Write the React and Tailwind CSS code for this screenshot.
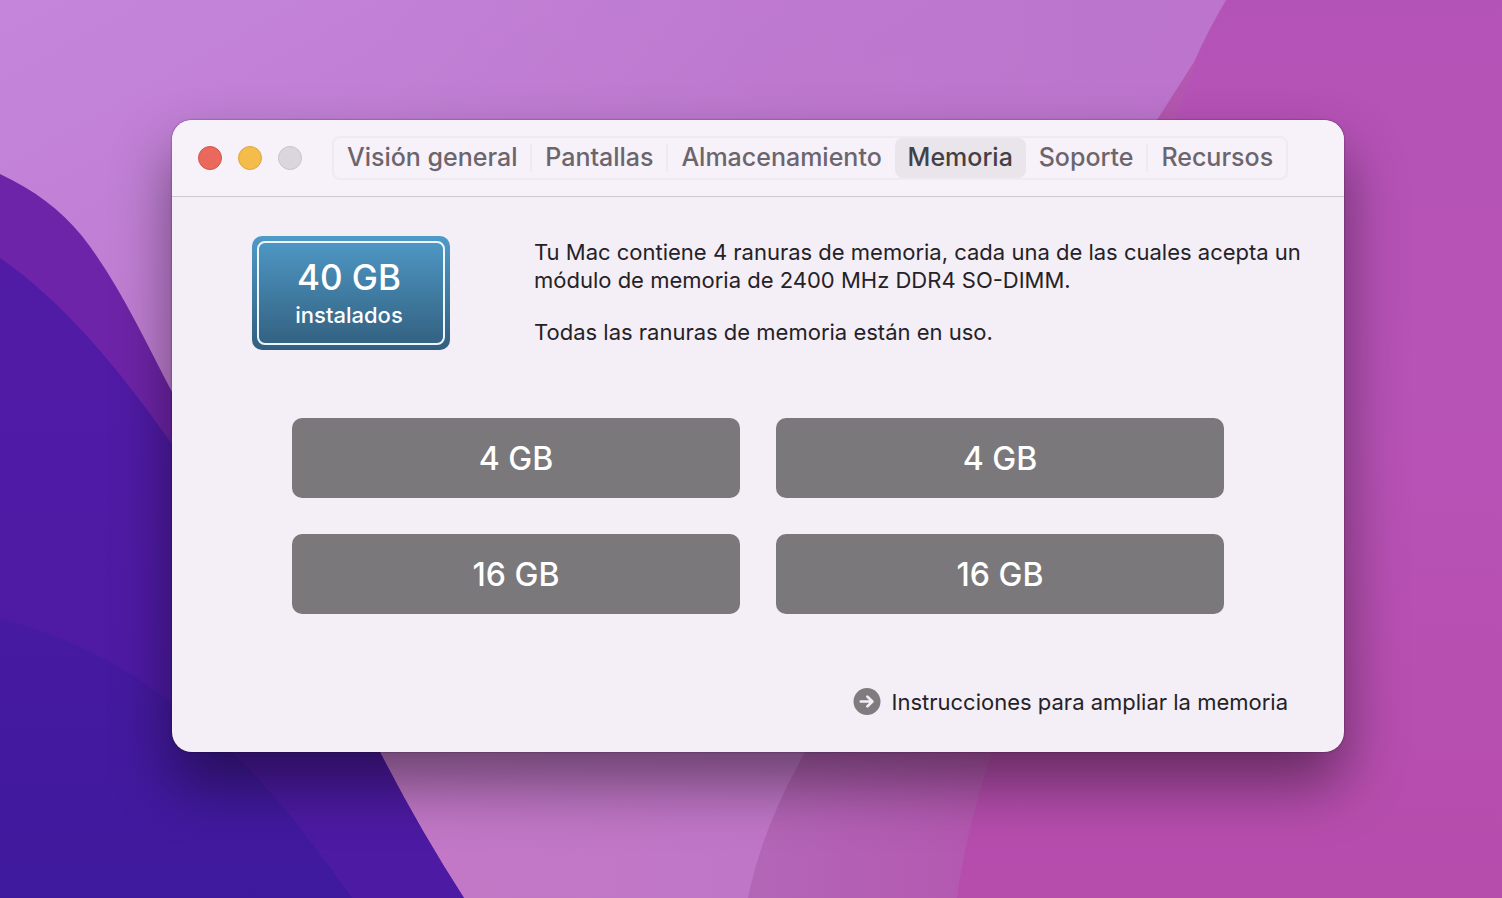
import { useId } from "react";

const TABS = ["Visión general", "Pantallas", "Almacenamiento", "Memoria", "Soporte", "Recursos"];
const ACTIVE_TAB = "Memoria";
const SLOTS = ["4 GB", "4 GB", "16 GB", "16 GB"];

function Wallpaper() {
  const id = useId();
  return (
    <svg
      className="absolute inset-0 -z-10 h-full w-full"
      viewBox="0 0 1502 898"
      preserveAspectRatio="xMidYMid slice"
      aria-hidden="true"
    >
      <defs>
        <linearGradient id={`${id}sky`} gradientUnits="userSpaceOnUse" x1="0" y1="0" x2="500" y2="898">
          <stop offset="0" stopColor="#c485db" />
          <stop offset="0.45" stopColor="#bf7cd0" />
          <stop offset="1" stopColor="#c378c5" />
        </linearGradient>
        <linearGradient id={`${id}skyRight`} x1="0" y1="0" x2="1" y2="0">
          <stop offset="0.25" stopColor="#bb73cc" stopOpacity="0" />
          <stop offset="0.8" stopColor="#bb73cc" stopOpacity="0.8" />
        </linearGradient>
        <linearGradient id={`${id}fold`} gradientUnits="userSpaceOnUse" x1="750" y1="0" x2="990" y2="0">
          <stop offset="0" stopColor="#b366b7" />
          <stop offset="1" stopColor="#b457b0" />
        </linearGradient>
        <linearGradient id={`${id}magenta`} x1="0" y1="0" x2="0" y2="1">
          <stop offset="0" stopColor="#b453b7" />
          <stop offset="0.5" stopColor="#b852b6" />
          <stop offset="1" stopColor="#b64cac" />
        </linearGradient>
        <linearGradient id={`${id}violet`} gradientUnits="userSpaceOnUse" x1="0" y1="260" x2="0" y2="898">
          <stop offset="0" stopColor="#511ba6" />
          <stop offset="1" stopColor="#4c1aa3" />
        </linearGradient>
        <linearGradient id={`${id}indigo`} gradientUnits="userSpaceOnUse" x1="0" y1="620" x2="0" y2="898">
          <stop offset="0" stopColor="#461aa1" />
          <stop offset="1" stopColor="#3f199d" />
        </linearGradient>
      </defs>
      <rect width="1502" height="898" fill={`url(#${id}sky)`} />
      <rect width="1502" height="898" fill={`url(#${id}skyRight)`} />
      <path
        d="M1226 0 Q1208 30 1194 62 Q1175 92 1157 120 C1040 320 860 600 805 752 Q762 828 748 898 H1502 V0 Z"
        fill={`url(#${id}fold)`}
      />
      <path
        d="M1227 0 Q1197 50 1176 120 C1120 330 1020 540 992 752 Q966 830 957 898 H1502 V0 Z"
        fill={`url(#${id}magenta)`}
      />
      <path
        d="M0 174 C34 190 60 209 82 236 C118 282 143 337 172 392 C240 520 320 640 380 752 Q420 830 464 898 H0 Z"
        fill="#6e24a8"
      />
      <path
        d="M0 258 C62 300 120 370 172 444 C250 550 320 640 380 752 Q420 830 464 898 H0 Z"
        fill={`url(#${id}violet)`}
      />
      <path
        d="M0 619 C70 636 128 668 172 703 C250 758 300 825 352 898 H0 Z"
        fill={`url(#${id}indigo)`}
      />
    </svg>
  );
}

function WindowControls() {
  return (
    <div className="flex shrink-0 gap-4">
      <button type="button" aria-label="Cerrar" className="size-6 rounded-full border border-[#d2544b] bg-[#ea695c]" />
      <button type="button" aria-label="Minimizar" className="size-6 rounded-full border border-[#dba63c] bg-[#f4bd4b]" />
      <button type="button" disabled aria-label="Ampliar" className="size-6 rounded-full border border-[#c8c4cc] bg-[#dad6de]" />
    </div>
  );
}

function TabBar() {
  return (
    <nav
      aria-label="Secciones"
      className="flex h-11 w-[956px] rounded-lg border-2 border-[#efe9f1] text-[25px] leading-8 font-medium text-[#6b656d]"
    >
      {TABS.map((tab, i) => {
        const active = tab === ACTIVE_TAB;
        const divided = i > 0 && !active && TABS[i - 1] !== ACTIVE_TAB;
        return (
          <div key={tab} className="flex flex-auto items-center">
            {divided && <span className="h-7 w-0.5 bg-[#efe9f1]" />}
            <button
              type="button"
              aria-current={active ? "page" : undefined}
              className={
                active
                  ? "flex h-full flex-auto items-center justify-center rounded-lg bg-[#e9e5ea] pb-0.5 text-[#444146]"
                  : "flex h-full flex-auto items-center justify-center pb-0.5"
              }
            >
              {tab}
            </button>
          </div>
        );
      })}
    </nav>
  );
}

export default function App() {
  return (
    <main className="relative isolate min-h-screen overflow-hidden pt-[120px] pr-[158px] pb-[146px] pl-[172px] font-['Inter',sans-serif] text-[#242226]">
      <Wallpaper />
      <section className="overflow-hidden rounded-[20px] bg-[#f4eef6] shadow-[0_0_2px_rgba(0,0,0,0.5),0_32px_60px_rgba(0,0,0,0.45)]">
        <header className="flex h-[77px] items-center gap-[30px] border-b border-[#cfc8d1] bg-[#f7f1f9] pr-14 pl-[26px]">
          <WindowControls />
          <TabBar />
        </header>

        <div className="pt-[39px] pb-9">
          <div className="flex items-start gap-[84px] pr-8 pl-20">
            <div className="h-[114px] w-[198px] shrink-0 rounded-[10px] bg-linear-to-b from-[#4f9ac8] to-[#325f7e] p-[5px] text-white">
              <div className="flex h-full flex-col items-center justify-center rounded-lg border-2 border-[#eaf6fc] pt-1 pr-1">
                <strong className="text-[35px] leading-10 font-medium">40 GB</strong>
                <span className="text-[22px] leading-9 font-medium">instalados</span>
              </div>
            </div>
            <div className="flex flex-col gap-6 pt-0.5 text-[22px] leading-7">
              <p>
                Tu Mac contiene 4 ranuras de memoria, cada una de las cuales acepta un módulo de memoria de 2400 MHz
                DDR4 SO-DIMM.
              </p>
              <p>Todas las ranuras de memoria están en uso.</p>
            </div>
          </div>

          <ul className="mt-[68px] grid grid-cols-2 gap-9 px-[120px]">
            {SLOTS.map((size, i) => (
              <li
                key={i}
                className="flex h-20 items-center justify-center rounded-[10px] bg-[#7b787b] pt-0.5 text-[32px] leading-10 font-medium text-white"
              >
                {size}
              </li>
            ))}
          </ul>

          <div className="mt-[74px] flex justify-end pr-14">
            <a href="#ampliar" className="flex items-center gap-[11px] text-[22px] leading-7">
              <svg className="size-7" viewBox="0 0 28 28" fill="none" aria-hidden="true">
                <circle cx="14" cy="13.5" r="13.5" fill="#7f7c80" />
                <path
                  d="M7.8 13.5H19.2M14.4 8.6L19.4 13.5L14.4 18.4"
                  stroke="#f4eef6"
                  strokeWidth="2.7"
                  strokeLinecap="round"
                  strokeLinejoin="round"
                />
              </svg>
              Instrucciones para ampliar la memoria
            </a>
          </div>
        </div>
      </section>
    </main>
  );
}
